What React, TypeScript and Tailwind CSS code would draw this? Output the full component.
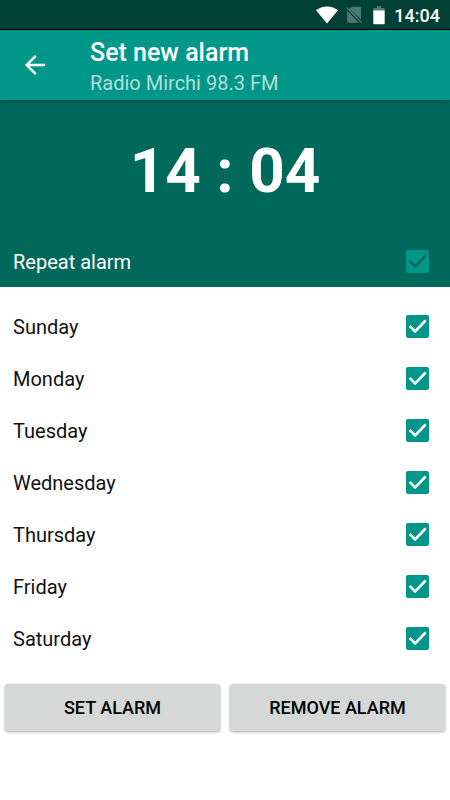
import { useState } from "react";

const DAYS = ["Sunday", "Monday", "Tuesday", "Wednesday", "Thursday", "Friday", "Saturday"];

type CheckRowProps = {
  label: string;
  checked: boolean;
  onChange: () => void;
  muted?: boolean;
};

function CheckRow({ label, checked, onChange, muted }: CheckRowProps) {
  return (
    <label className="flex h-[52px] items-center justify-between pr-[21px] pl-[13px] text-xl">
      <span className="pt-px">{label}</span>
      <span className="grid size-[23px] place-items-center">
        <input
          type="checkbox"
          checked={checked}
          onChange={onChange}
          className="col-start-1 row-start-1 size-[23px] appearance-none rounded-[2px] border-2 border-[#009688] checked:bg-[#009688]"
        />
        {checked && (
          <svg
            viewBox="0 0 23 23"
            className={`pointer-events-none col-start-1 row-start-1 size-[23px] ${muted ? "text-[#00695c]" : "text-white"}`}
            fill="none"
            stroke="currentColor"
            strokeWidth="2.6"
          >
            <path d="M3.600 10.800l5.600 5.600L19.600 5.500" />
          </svg>
        )}
      </span>
    </label>
  );
}

function StatusBar() {
  return (
    <div className="flex h-[30px] items-center justify-end border-b border-black bg-[#004037] pr-[10px] text-white">
      <svg viewBox="0 0 22 18" className="mr-[8px] h-[18px] w-[22px]" fill="currentColor">
        <path d="M0 4.300C3 1.800 6.800.400 11 .400s8 1.400 11 3.900L11 17.600z" />
      </svg>
      <svg viewBox="0 0 16 18" className="mr-[11px] h-[18px] w-4" fill="#4d7973">
        <path d="M6 .800h7.900q1.100 0 1.100 1.100v11.300L3.500 3.200z" />
        <path d="M1.200 4.800L12.700 16.700H2.300q-1.100 0-1.100-1.100z" />
        <path d="M.2 2.100l1.100-1.100L16 16l-1.100 1.100z" />
      </svg>
      <svg viewBox="0 0 12 20" className="mr-[9px] h-5 w-3">
        <path d="M4 1h4v2h3q.7 0 .7.700V6H.3V3.700q0-.7.700-.7h3z" fill="#4d7973" />
        <path d="M.3 5.500h11.400v13q0 .7-.7.700H1q-.7 0-.7-.7z" fill="#fff" />
      </svg>
      <span className="pt-[2px] text-lg leading-none font-medium">14:04</span>
    </div>
  );
}

export default function App() {
  const [repeat, setRepeat] = useState(true);
  const [selected, setSelected] = useState<string[]>(DAYS);

  const toggleDay = (day: string) => {
    setSelected((prev) => (prev.includes(day) ? prev.filter((d) => d !== day) : [...prev, day]));
  };

  const buttonClass =
    "h-[47px] flex-1 rounded-[3px] bg-[#d6d8d7] text-lg font-medium text-black uppercase shadow-[0_1px_3px_rgba(0,0,0,0.35)]";

  return (
    <div className="min-h-screen bg-white font-[Roboto,sans-serif] text-[#111]">
      <StatusBar />

      <header className="relative flex h-[70px] items-center bg-[#009688] pl-[25px] text-white shadow-[0_1px_4px_rgba(0,0,0,0.4)]">
        <button type="button" aria-label="Back" className="mr-[45px] size-5">
          <svg viewBox="0 0 20 20" className="size-5" fill="none" stroke="currentColor" strokeWidth="2.4">
            <path d="M20 10H2M10.800.900L1.700 10l9.100 9.100" />
          </svg>
        </button>
        <div className="pt-1">
          <h1 className="text-[25px] leading-[32px] font-medium">Set new alarm</h1>
          <p className="text-xl leading-7 text-[#b2dfdb]">Radio Mirchi 98.3 FM</p>
        </div>
      </header>

      <section className="bg-[#00695c] text-white">
        <div className="flex h-[135px] items-center justify-center pt-[6px] text-[62px] leading-none font-bold">
          14 : 04
        </div>
        <CheckRow label="Repeat alarm" checked={repeat} onChange={() => setRepeat(!repeat)} muted />
      </section>

      <main className="pt-[13px]">
        {DAYS.map((day) => (
          <CheckRow
            key={day}
            label={day}
            checked={selected.includes(day)}
            onChange={() => toggleDay(day)}
          />
        ))}
      </main>

      <div className="flex gap-[10px] px-[5px] pt-5">
        <button type="button" className={buttonClass}>
          Set alarm
        </button>
        <button type="button" className={buttonClass}>
          Remove alarm
        </button>
      </div>
    </div>
  );
}
